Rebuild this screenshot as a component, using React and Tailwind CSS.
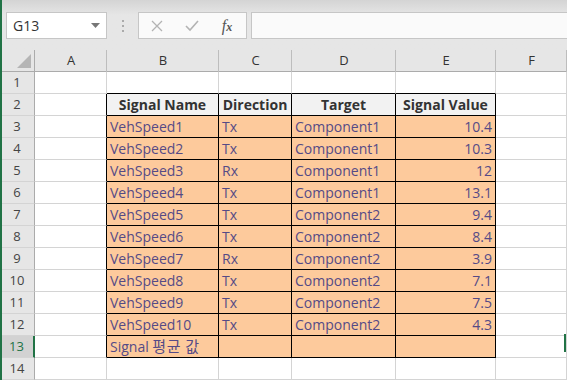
import React from "react";

const rows = [
  ["VehSpeed1", "Tx", "Component1", "10.4"],
  ["VehSpeed2", "Tx", "Component1", "10.3"],
  ["VehSpeed3", "Rx", "Component1", "12"],
  ["VehSpeed4", "Tx", "Component1", "13.1"],
  ["VehSpeed5", "Tx", "Component2", "9.4"],
  ["VehSpeed6", "Tx", "Component2", "8.4"],
  ["VehSpeed7", "Rx", "Component2", "3.9"],
  ["VehSpeed8", "Tx", "Component2", "7.1"],
  ["VehSpeed9", "Tx", "Component2", "7.5"],
  ["VehSpeed10", "Tx", "Component2", "4.3"],
  [<span>Signal <span className="text-[15px] tracking-[0.5px]">평균 값</span></span>, "", "", ""],
];

const font = { fontFamily: '"Open Sans", "Noto Sans CJK KR", sans-serif' };

function RowHead({ n, sel }) {
  return (
    <div
      className={
        "h-[22px] flex items-center justify-center text-[13px] border-b border-[#d4d4d4] " +
        (sel
          ? "bg-[#d2d2d2] text-[#217346] border-r-2 border-r-[#217346]"
          : "bg-[#e6e6e6] text-[#444] border-r border-r-[#ababab]")
      }
    >
      {n}
    </div>
  );
}

function Cell({ children, className = "" }) {
  return (
    <div className={"h-[22px] flex items-center border-b border-r border-[#d4d4d4] " + className}>
      {children}
    </div>
  );
}

export default function App() {
  return (
    <div className="w-[567px] h-[380px] overflow-hidden bg-white relative" style={font}>
      <div className="absolute left-0 top-0 w-[2px] h-[380px] bg-[#217346] z-10" />
      {/* Toolbar */}
      <div className="h-[50px] bg-gradient-to-b from-[#d4d4d4] via-[#e6e6e6] via-30% to-[#e6e6e6] flex items-start pt-[12px] pl-[6px]">
        <div className="w-[101px] h-[27px] bg-white border border-[#c6c6c6] flex items-center justify-between pl-[6px] pr-[6px]">
          <span className="text-[14px] text-[#333]">G13</span>
          <svg width="9" height="5" viewBox="0 0 9 5"><path d="M0 0h9L4.5 5z" fill="#777" /></svg>
        </div>
        <div className="w-[31px] h-[27px] flex flex-col items-center justify-center gap-[3px]">
          <div className="w-[2px] h-[2px] bg-[#aaa]" />
          <div className="w-[2px] h-[2px] bg-[#aaa]" />
          <div className="w-[2px] h-[2px] bg-[#aaa]" />
        </div>
        <div className="w-[109px] h-[27px] bg-[#fafafa] border border-[#c6c6c6] flex items-center">
          <div className="w-[36px] flex justify-center">
            <svg width="12" height="12" viewBox="0 0 12 12"><path d="M1 1l10 10M11 1L1 11" stroke="#b3b3b3" strokeWidth="1.3" /></svg>
          </div>
          <div className="w-[34px] flex justify-center">
            <svg width="14" height="12" viewBox="0 0 14 12"><path d="M1 6l4 4 8-9" stroke="#b3b3b3" strokeWidth="1.6" fill="none" /></svg>
          </div>
          <div className="w-[36px] flex justify-center items-baseline italic text-[#555]" style={{ fontFamily: '"Liberation Serif", serif' }}>
            <span className="text-[16px]">f</span><span className="text-[12px] font-bold">x</span>
          </div>
        </div>
        <div className="ml-[4px] flex-1 h-[27px] bg-[#fafafa] border border-[#c6c6c6] border-r-0" />
      </div>
      {/* Grid */}
      <div className="grid grid-cols-[35px_72px_112px_73px_104px_100px_71px]">
        <div className="h-[22px] bg-[#e6e6e6] border-b border-[#ababab] border-r border-r-[#ababab] relative">
          <svg className="absolute right-[3px] bottom-[3px]" width="14" height="14" viewBox="0 0 14 14"><path d="M14 0V14H0z" fill="#b5b5b5" /></svg>
        </div>
        {["A", "B", "C", "D", "E", "F"].map((c) => (
          <div key={c} className="h-[22px] bg-[#e6e6e6] border-b border-[#ababab] relative flex items-center justify-center text-[13px] text-[#333]">
            {c}
            <div className="absolute right-0 top-0 bottom-[-1px] w-px bg-[#bdbdbd]" />
          </div>
        ))}
        <RowHead n={1} />
        <Cell />
        <Cell className="border-b-black" />
        <Cell className="border-b-black" />
        <Cell className="border-b-black" />
        <Cell className="border-b-black" />
        <Cell />
        <RowHead n={2} />
        <Cell className="border-r-black" />
        {["Signal Name", "Direction", "Target", "Signal Value"].map((h) => (
          <Cell key={h} className="bg-[#f2f2f2] border-black justify-center font-bold text-[14px] text-[#333]">
            {h}
          </Cell>
        ))}
        <Cell />
        {rows.map((r, i) => (
          <React.Fragment key={i}>
            <RowHead n={i + 3} sel={i === 10} />
            <Cell className="border-r-black" />
            <Cell className="bg-[#fdca9c] border-black pl-[3px] text-[14px] text-[#554a86] whitespace-nowrap">{r[0]}</Cell>
            <Cell className="bg-[#fdca9c] border-black pl-[3px] text-[14px] text-[#554a86]">{r[1]}</Cell>
            <Cell className="bg-[#fdca9c] border-black pl-[3px] text-[14px] text-[#554a86]">{r[2]}</Cell>
            <Cell className="bg-[#fdca9c] border-black justify-end pr-[3px] text-[14px] text-[#554a86]">{r[3]}</Cell>
            <Cell className="relative">
              {i === 10 && <div className="absolute right-0 top-[-2px] w-[2px] h-[18px] bg-[#217346]" />}
            </Cell>
          </React.Fragment>
        ))}
        <RowHead n={14} />
        <Cell />
        <Cell />
        <Cell />
        <Cell />
        <Cell />
        <Cell />
      </div>
    </div>
  );
}
